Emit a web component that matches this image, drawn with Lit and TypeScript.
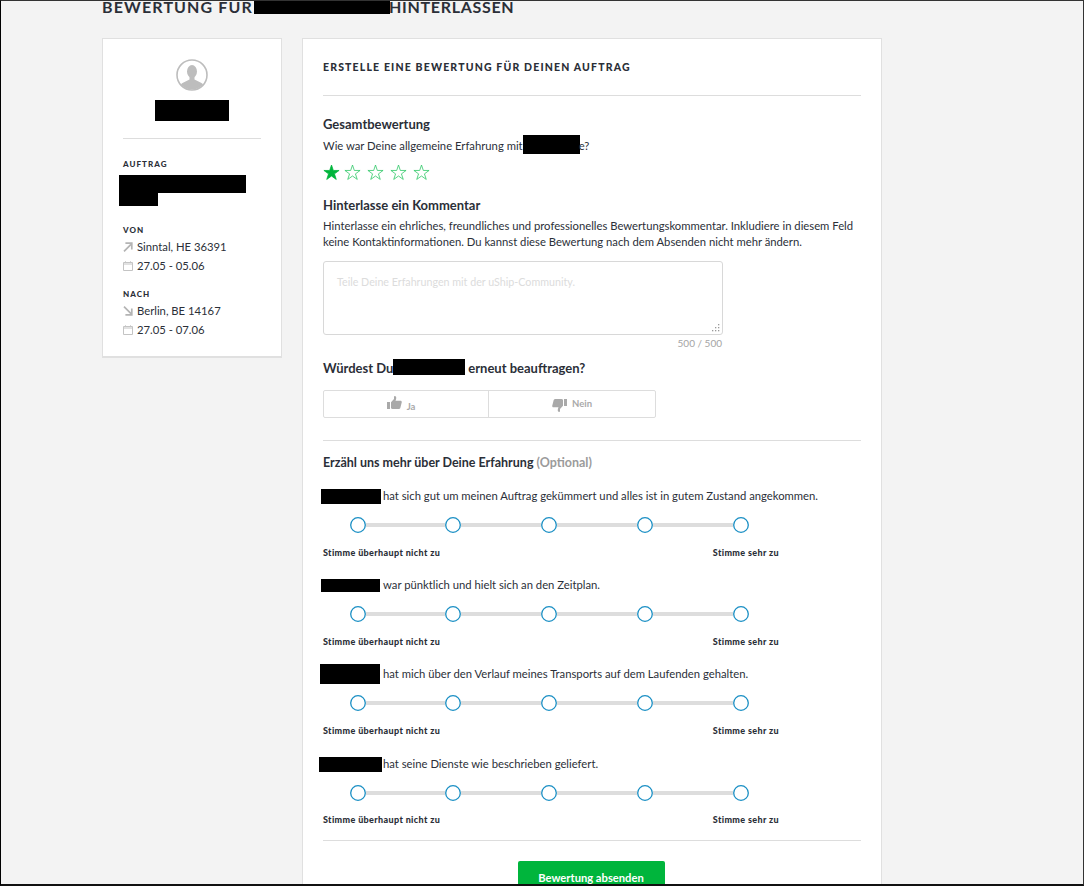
import { LitElement, html, css } from "lit";
import { customElement } from "lit/decorators.js";

const calendar = html`<svg class="ico" viewBox="0 0 10 10" width="10" height="10"><path d="M.5 1.500h9v8h-9zM.5 3h9M2.500.3v1.200M7.500.3v1.200" fill="none" stroke="#c4c4c4" stroke-width="1"/></svg>`;
const arrowUp = html`<svg class="ico" viewBox="0 0 10 10" width="10" height="10"><path d="M1 9.300 8 2.300M2.400 1.200h6.400v6.400" fill="none" stroke="#b4b4b4" stroke-width="1.700"/></svg>`;
const arrowDown = html`<svg class="ico" viewBox="0 0 10 10" width="10" height="10"><path d="M1 .7 8 7.700M2.400 8.800h6.400V2.400" fill="none" stroke="#b4b4b4" stroke-width="1.700"/></svg>`;
const starPath = "M7.500.9 9.100 5.700h5.100l-4.100 3 1.600 4.900-4.200-3-4.200 3 1.600-4.900-4.100-3h5.100z";
const thumbPath = "M0 6h3v7H0zM4 6.200 7 3V.8C7 0 8.500-.2 9 .8c.5 1 .2 2.500-.5 4h5c1 0 1.500 1 1.200 1.800L13.300 12c-.3.7-1 1-1.600 1H6c-1 0-1.200-.6-2-.6z";
const dot = html`<svg class="dot" viewBox="0 0 16 16" width="16" height="16"><circle cx="8" cy="8" r="7.300" fill="#fff" stroke="#1a8fc4" stroke-width="1.300"/></svg>`;

@customElement("app-root")
export class AppRoot extends LitElement {
  static styles = css`
    :host { display: block; height: 886px; overflow: hidden; box-sizing: border-box; background: #f3f3f3; border: 1px solid #333; border-left-color: #000; border-bottom: 2px solid #111;
      font-family: Lato, "Liberation Sans", sans-serif; color: #2b2f38; font-size: 11.27px; }
    .page { width: 780px; margin-left: 101px; }
    h1 { margin: 0 0 24px; font-size: 16px; line-height: 12px; font-weight: 700; letter-spacing: 1.13px; text-transform: uppercase; white-space: nowrap; display: flex; }
    .redact { background: #000; display: inline-block; }
    .t-box { width: 136px; height: 13px; margin: 0 -1px 0 1px; flex: none; position: relative; }
    h1 .after { letter-spacing: .7px; }
    .cols { display: flex; gap: 20px; align-items: flex-start; }
    .card { background: #fff; border: 1px solid #e0e0e0; box-sizing: border-box; }
    .side { width: 180px; height: 320px; border-bottom-width: 2px; padding: 20px 20px 0; }
    .avatar { display: flex; justify-content: center; }
    .name { width: 74px; height: 21px; background: #000; margin: 9px auto 0; }
    hr { border: 0; height: 1px; background: #ddd; margin: 0; }
    .side hr { margin: 17px 0 20px; }
    .lbl { font-size: 8px; line-height: 10px; font-weight: 900; letter-spacing: 1.05px; color: #2b2f38; }
    .job { margin: 6px 0 0 -4px; height: 31px; }
    .job i { display: block; background: #000; }
    .job .a { width: 127px; height: 18px; }
    .job .b { width: 39px; height: 13px; }
    .g1 { margin-top: 19px; }
    .g2 { margin-top: 14px; }
    .row { display: flex; align-items: center; gap: 4px; height: 19px; }
    .lbl + .row { margin-top: 2px; }
    .ico, .dot { flex: none; }
    .main { width: 580px; height: 900px; padding: 0 20px; }
    .head { font-size: 10.5px; line-height: 14px; font-weight: 900; letter-spacing: 1.16px; padding-top: 21px; height: 35px; }
    h3 { font-size: 13px; line-height: 18px; font-weight: 700; margin: 0; }
    p { margin: 0; font-size: 11.27px; line-height: 16px; }
    .gesamt { margin-top: 19px; }
    .q { margin-top: 5px; display: flex; white-space: pre; }
    .q .redact { width: 57px; height: 19px; margin: -3px -1px 0 0; flex: none; }
    .stars { display: flex; gap: 6px; margin-top: 9px; height: 18px; align-items: center; }
    .stars svg:first-child { margin-right: -2px; }
    .kom { margin-top: 15px; }
    .kom p { margin-top: 4px; }
    .ta { width: 400px; height: 74px; box-sizing: border-box; border: 1px solid #d8d8d8; border-radius: 3px; margin-top: 11px; padding: 12px 13px; color: #dcdcdc; font-size: 10.7px; line-height: 16px; position: relative; }
    .grip { position: absolute; right: 2px; bottom: 2px; }
    .count { width: 399px; text-align: right; font-size: 10px; line-height: 14px; color: #a4a4a4; margin-top: 1px; }
    .again { display: flex; align-items: center; margin-top: 7px; white-space: pre; height: 22px; }
    .again .redact { width: 72px; height: 16px; margin: -3px 3px 0 0; flex: none; }
    .yn { display: flex; width: 333px; height: 28px; border: 1px solid #ddd; border-radius: 2px; box-sizing: border-box; margin-top: 11px; }
    .yn div { display: flex; align-items: center; justify-content: center; gap: 5px; font-size: 9.5px; font-weight: 700; color: #a9a9a9; }
    .yn .y { width: 165px; border-right: 1px solid #ddd; box-sizing: border-box; padding-right: 10px; }
    .yn .n { flex: 1; }
    .yn .y span { margin-top: 5px; }
    .yn .y svg { margin-top: -2px; }
    .yn .n span { margin-top: -1px; }
    .yn .n svg { margin-top: 1px; }
    .sep2 { margin-top: 22px; }
    .more { margin-top: 13px; font-size: 12.5px; }
    .more span { color: #9b9b9b; }
    .item { height: 89px; }
    .items { margin-top: 13px; }
    .qq { display: flex; align-items: center; line-height: 16px; height: 16px; white-space: pre; margin-left: -2px; padding-top: 3px; }
    .qq .redact { flex: none; }
    .scale { display: flex; align-items: center; width: 399px; margin: 13px 0 0 27px; }
    .seg { flex: none; width: 80px; height: 4px; background: #ddd; }
    .seg:first-of-type { width: 79px; }
    .ends { display: flex; justify-content: space-between; width: 456px; margin-top: 14px; font-size: 9px; line-height: 12px; font-weight: 900; letter-spacing: .36px; }
    .fourth { padding-top: 1px; }
    .fourth .ends { margin-top: 13px; }
    .submit { display: flex; justify-content: center; margin: 20px 2px 0 0; }
    .submit div { width: 147px; height: 40px; background: #00b53c; color: #fff; font-weight: 700; font-size: 11.2px; border-radius: 2px; display: flex; justify-content: center; padding-top: 9px; box-sizing: border-box; line-height: 16px; }
    .last { margin-top: -2px; }
  `;

  private question(left: number, w: number, h: number, text: string, cls = "") {
    return html`<div class="item ${cls}">
      <div class="qq"><span class="redact" style="width:${w}px;height:${h}px;margin-left:${left - 321}px;margin-right:${383 - left - w}px"></span>${text}</div>
      <div class="scale">${dot}<i class="seg"></i>${dot}<i class="seg"></i>${dot}<i class="seg"></i>${dot}<i class="seg"></i>${dot}</div>
      <div class="ends"><span>Stimme überhaupt nicht zu</span><span>Stimme sehr zu</span></div>
    </div>`;
  }

  render() {
    return html`<div class="page">
      <h1>Bewertung für<span class="redact t-box"></span><span class="after">hinterlassen</span></h1>
      <div class="cols">
        <aside class="card side">
          <div class="avatar">
            <svg viewBox="0 0 32 32" width="32" height="32">
              <defs><clipPath id="c"><circle cx="16" cy="16" r="14.500"/></clipPath></defs>
              <circle cx="16" cy="16" r="15" fill="#fff" stroke="#bdbdbd" stroke-width="1.600"/>
              <g clip-path="url(#c)" fill="#bdbdbd">
                <ellipse cx="16" cy="12.500" rx="5" ry="6.500"/>
                <path d="M13.500 17h5v3.500l7 3.500c1.500.8 2.500 2 2.500 4v4H4v-4c0-2 1-3.200 2.500-4l7-3.500z"/>
              </g>
            </svg>
          </div>
          <div class="name"></div>
          <hr />
          <div class="lbl">AUFTRAG</div>
          <div class="job"><i class="a"></i><i class="b"></i></div>
          <div class="lbl g1">VON</div>
          <div class="row">${arrowUp}<span>Sinntal, HE 36391</span></div>
          <div class="row">${calendar}<span>27.05 - 05.06</span></div>
          <div class="lbl g2">NACH</div>
          <div class="row">${arrowDown}<span>Berlin, BE 14167</span></div>
          <div class="row">${calendar}<span>27.05 - 07.06</span></div>
        </aside>
        <main class="card main">
          <div class="head">ERSTELLE EINE BEWERTUNG FÜR DEINEN AUFTRAG</div>
          <hr />
          <h3 class="gesamt">Gesamtbewertung</h3>
          <p class="q">Wie war Deine allgemeine Erfahrung mit<span class="redact"></span>e?</p>
          <div class="stars">
            <svg viewBox="0 0 15 15" width="17" height="17"><path d="${starPath}" fill="#00b53c" stroke="#00b53c" stroke-width=".7"/></svg>
            ${[0, 1, 2, 3].map(() => html`<svg viewBox="0 0 15 15" width="17" height="17"><path d="${starPath}" fill="none" stroke="#2ec866" stroke-width=".7"/></svg>`)}
          </div>
          <div class="kom">
            <h3>Hinterlasse ein Kommentar</h3>
            <p>Hinterlasse ein ehrliches, freundliches und professionelles Bewertungskommentar. Inkludiere in diesem Feld keine Kontaktinformationen. Du kannst diese Bewertung nach dem Absenden nicht mehr ändern.</p>
          </div>
          <div class="ta">Teile Deine Erfahrungen mit der uShip-Community.
            <svg class="grip" viewBox="0 0 8 8" width="8" height="8" fill="#9a9a9a"><rect x="6" y="0" width="1.300" height="1.300"/><rect x="3" y="3" width="1.300" height="1.300"/><rect x="6" y="3" width="1.300" height="1.300"/><rect x="0" y="6" width="1.300" height="1.300"/><rect x="3" y="6" width="1.300" height="1.300"/><rect x="6" y="6" width="1.300" height="1.300"/></svg>
          </div>
          <div class="count">500 / 500</div>
          <h3 class="again">Würdest Du<span class="redact"></span>erneut beauftragen?</h3>
          <div class="yn">
            <div class="y">
              <svg viewBox="0 0 15 14" width="15" height="14" fill="#a9a9a9"><path d="${thumbPath}"/></svg>
              <span>Ja</span>
            </div>
            <div class="n">
              <svg viewBox="0 0 15 14" width="15" height="14" fill="#a9a9a9"><g transform="rotate(180 7.500 7)"><path d="${thumbPath}"/></g></svg>
              <span>Nein</span>
            </div>
          </div>
          <hr class="sep2" />
          <h3 class="more">Erzähl uns mehr über Deine Erfahrung <span>(Optional)</span></h3>
          <div class="items">
            ${this.question(321, 60, 15, "hat sich gut um meinen Auftrag gekümmert und alles ist in gutem Zustand angekommen.")}
            ${this.question(321, 59, 13, "war pünktlich und hielt sich an den Zeitplan.")}
            ${this.question(320, 60, 20, "hat mich über den Verlauf meines Transports auf dem Laufenden gehalten.")}
            ${this.question(319, 63, 15, "hat seine Dienste wie beschrieben geliefert.", "fourth")}
          </div>
          <hr class="last" />
          <div class="submit"><div>Bewertung absenden</div></div>
        </main>
      </div>
    </div>`;
  }
}
